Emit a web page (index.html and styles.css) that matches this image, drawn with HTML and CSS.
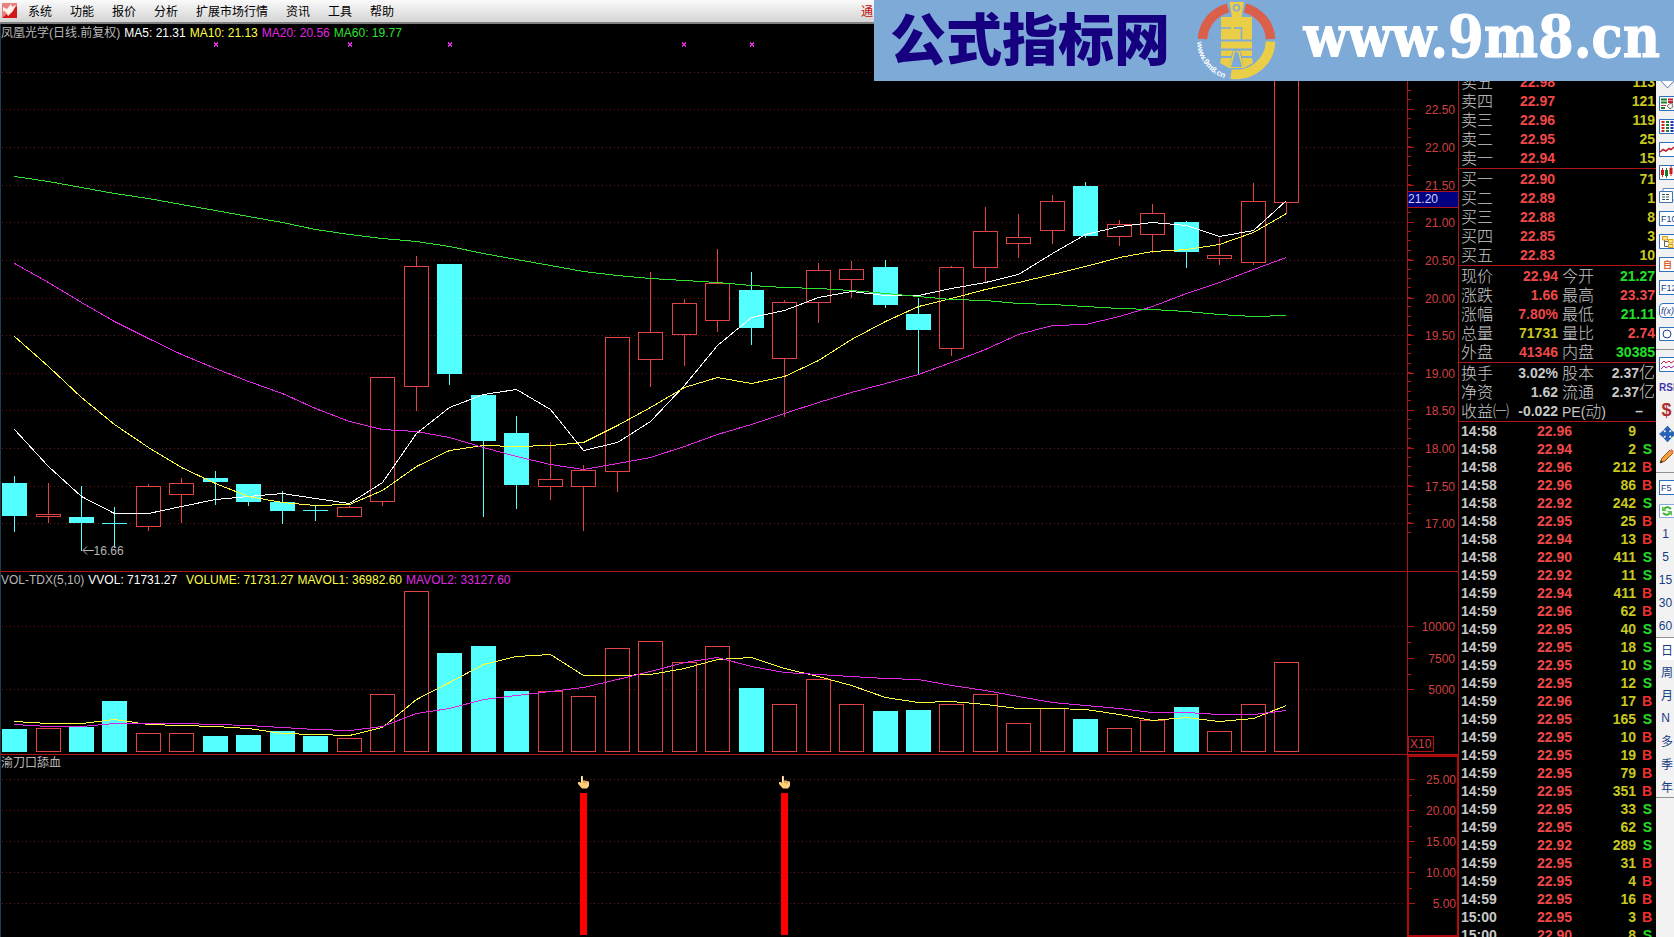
FILE: index.html
```html
<!DOCTYPE html>
<html lang="zh-CN">
<head>
  <meta charset="UTF-8"/>
  <meta name="viewport" content="width=device-width, initial-scale=1.0"/>
  <title>凤凰光学 日线</title>
  <link rel="stylesheet" href="styles.css">
</head>
<body>

  <header class="menubar">
    <svg class="app-icon" viewBox="0 0 15 15">
      <rect width="15" height="15" fill="#e88080"/>
      <path d="M0 15L15 3V15Z" fill="#d01818"/>
      <path d="M1 4L5 6L9 1L10 4L14 2L11 8L6 13L4 9L1 8Z" fill="#fff0ea"/>
    </svg>
    <nav class="menu">
      <button>系统</button>
      <button>功能</button>
      <button>报价</button>
      <button>分析</button>
      <button>扩展市场行情</button>
      <button>资讯</button>
      <button>工具</button>
      <button>帮助</button>
    </nav>
    <div class="app-title">通</div>
  </header>

  <main class="workspace">
    <div class="charts">
      <!-- Daily candles -->
      <section class="panel price-panel">
        <div class="plot">
          <svg id="pricePlot" class="drawing" viewBox="0 24 1407 547" preserveAspectRatio="none"></svg>
          <div class="legend">
            <span class="muted">凤凰光学(日线.前复权)</span>
            <span class="white">MA5: 21.31</span>
            <span class="yellow">MA10: 21.13</span>
            <span class="magenta">MA20: 20.56</span>
            <span class="green">MA60: 19.77</span>
          </div>
          <div class="low-mark">
            <svg width="12" height="11" viewBox="0 0 12 11"><path d="M12 5.5H1M5 1.5L1 5.5L5 9.5" fill="none" stroke="#b4b4b4"/></svg>
            <span>16.66</span>
          </div>
        </div>
        <div class="axis">
          <svg id="priceAxis" class="drawing"></svg>
          <div class="cursor-price">21.20</div>
        </div>
      </section>

      <!-- Volume -->
      <section class="panel">
        <div class="plot">
          <svg id="volumePlot" class="drawing" viewBox="0 572 1407 182" preserveAspectRatio="none"></svg>
          <div class="legend">
            <span class="muted">VOL-TDX(5,10)</span>
            <span class="white wide">VVOL: 71731.27</span>
            <span class="yellow">VOLUME: 71731.27</span>
            <span class="yellow">MAVOL1: 36982.60</span>
            <span class="magenta">MAVOL2: 33127.60</span>
          </div>
        </div>
        <div class="axis">
          <svg id="volumeAxis" class="drawing"></svg>
          <div class="unit">X10</div>
        </div>
      </section>

      <!-- Signal indicator -->
      <section class="panel">
        <div class="plot">
          <svg id="signalPlot" class="drawing" viewBox="0 755 1407 182" preserveAspectRatio="none"></svg>
          <div class="legend"><span class="muted">渝刀口舔血</span></div>
          <svg class="hand first" viewBox="0 0 11 14"><path d="M3 1.5Q4 0 5 1.5V6L6 5L7 6L8 5.500L9 6.500L10 6L11 7V11L9 13.500H4L0 9V7H2L3 8Z" fill="#ffcf7a"/><path d="M3.500 1.500V7" stroke="#fff2cc"/><path d="M6 6V8M8 6.500V8.500" stroke="#c08038"/></svg>
          <svg class="hand second" viewBox="0 0 11 14"><path d="M3 1.5Q4 0 5 1.5V6L6 5L7 6L8 5.500L9 6.500L10 6L11 7V11L9 13.500H4L0 9V7H2L3 8Z" fill="#ffcf7a"/><path d="M3.500 1.500V7" stroke="#fff2cc"/><path d="M6 6V8M8 6.500V8.500" stroke="#c08038"/></svg>
        </div>
        <div class="axis selected">
          <svg id="signalAxis" class="drawing"></svg>
        </div>
      </section>
    </div>

    <aside class="quote">
      <table class="levels">
        <tr><th>卖五</th><td class="red">22.98</td><td class="vol">113</td></tr>
        <tr><th>卖四</th><td class="red">22.97</td><td class="vol">121</td></tr>
        <tr><th>卖三</th><td class="red">22.96</td><td class="vol">119</td></tr>
        <tr><th>卖二</th><td class="red">22.95</td><td class="vol">25</td></tr>
        <tr><th>卖一</th><td class="red">22.94</td><td class="vol">15</td></tr>
      </table>
      <table class="levels">
        <tr><th>买一</th><td class="red">22.90</td><td class="vol">71</td></tr>
        <tr><th>买二</th><td class="red">22.89</td><td class="vol">1</td></tr>
        <tr><th>买三</th><td class="red">22.88</td><td class="vol">8</td></tr>
        <tr><th>买四</th><td class="red">22.85</td><td class="vol">3</td></tr>
        <tr><th>买五</th><td class="red">22.83</td><td class="vol">10</td></tr>
      </table>
      <table class="summary">
        <tr><th>现价</th><td class="red">22.94</td><th>今开</th><td class="up">21.27</td></tr>
        <tr><th>涨跌</th><td class="red">1.66</td><th>最高</th><td class="red">23.37</td></tr>
        <tr><th>涨幅</th><td class="red">7.80%</td><th>最低</th><td class="up">21.11</td></tr>
        <tr><th>总量</th><td class="vol">71731</td><th>量比</th><td class="red">2.74</td></tr>
        <tr><th>外盘</th><td class="red">41346</td><th>内盘</th><td class="up">30385</td></tr>
      </table>
      <table class="summary">
        <tr><th>换手</th><td>3.02%</td><th>股本</th><td>2.37<i>亿</i></td></tr>
        <tr><th>净资</th><td>1.62</td><th>流通</th><td>2.37<i>亿</i></td></tr>
        <tr><th>收益㈠</th><td>-0.022</td><th><b>PE(</b>动<b>)</b></th><td class="none">–</td></tr>
      </table>
      <table class="ticks" id="ticks"></table>
    </aside>

    <div class="toolbar">
      <button aria-label="下翻"><svg viewBox="0 0 18 18"><path d="M5.500 1.500H11.500V8.500H15.500L8.500 16L1.500 8.500H5.500Z" fill="#fff" stroke="#5878b8"/></svg></button>
      <button aria-label="报价表"><svg viewBox="0 0 18 18"><path d="M.5 1.500H18V15.500H.5Z" fill="#fff" stroke="#2f6fc0"/><path d="M2 4.500H8M2 7.500H8M2 13H6" stroke="#18802c" stroke-width="2"/><path d="M9 4.500H14M9 7H14" stroke="#c02030" stroke-width="2"/><path d="M2 10.500H7" stroke="#c02030"/><path d="M8 11L11 14L14 12L13 8L10 9Z" fill="#eee" stroke="#777"/></svg></button>
      <button aria-label="列表"><svg viewBox="0 0 18 18"><path d="M.5 1.500H18V15.500H.5Z" fill="#fff" stroke="#2f6fc0"/><g stroke-width="3" stroke-dasharray="2 1"><path d="M4 3V15" stroke="#d02020"/><path d="M8.500 3V15" stroke="#108030"/><path d="M13 3V15" stroke="#2030b0"/></g></svg></button>
      <button aria-label="分时图"><svg viewBox="0 0 18 18"><path d="M.5 1.500H18V15.500H.5Z" fill="#fff" stroke="#2f6fc0"/><path d="M1 11L4 8.500L7 10L10 7.500L12 8.500L15 6" fill="none" stroke="#c01c24" stroke-width="1.500"/></svg></button>
      <button aria-label="K线图"><svg viewBox="0 0 18 18"><path d="M.5 1.500H18V15.500H.5Z" fill="#fff" stroke="#2f6fc0"/><path d="M3.500 6V11M12 4V10" stroke="#d01818" stroke-width="3"/><path d="M7.500 6V12" stroke="#0c802c" stroke-width="3"/><path d="M3.500 4V13M12 2V12" stroke="#d01818"/><path d="M7.500 4V14" stroke="#0c802c"/></svg></button>
      <button aria-label="多窗口"><svg viewBox="0 0 18 18"><path d="M4 1.500H18V13H4Z" fill="#fff" stroke="#6888b8"/><path d="M.5 4.500H13.500V15.500H.5Z" fill="#fff" stroke="#4470b0"/><path d="M3 7.500H11M3 10H11M3 12.500H11" stroke="#355" stroke-dasharray="3 1"/></svg></button>
      <button class="key">F10</button>
      <button aria-label="结构"><svg viewBox="0 0 18 18"><path d="M.5 1.500H18V15.500H.5Z" fill="#fff" stroke="#2f6fc0"/><path d="M5.500 7V13.500H10M5.500 8.500H10" fill="none" stroke="#666"/><path d="M3.500 3.500H8.500V7H3.500ZM9.500 6.500H14V10H9.500ZM9.500 11.500H14V14.500H9.500Z" fill="#ffe890" stroke="#d4a010"/></svg></button>
      <button class="key own">自</button>
      <button class="key">F12</button>
      <button class="key formula">f(x)</button>
      <button aria-label="圆"><svg viewBox="0 0 18 18"><path d="M.5 2.500H18V15.500H.5Z" fill="#fff" stroke="#2f6fc0"/><circle cx="8" cy="9" r="4" fill="none" stroke="#184090"/></svg></button>
      <hr>
      <button aria-label="叠加"><svg viewBox="0 0 18 18"><path d="M.5 1.500H18V15.500H.5Z" fill="#fff" stroke="#2f6fc0"/><path d="M2 8L5 5L7 7L10 5L12 7L15 5" fill="none" stroke="#c02040"/><path d="M2 13L5 10L7 12L10 10L12 12L15 10" fill="none" stroke="#a020a0"/></svg></button>
      <button class="rsi">RSI</button>
      <button class="money">$</button>
      <button aria-label="移动"><svg viewBox="0 0 18 18"><path d="M8.500 1L12 5H10V7.500H12.500V5.500L16.500 9L12.500 12.500V10.500H10V13H12L8.500 17L5 13H7V10.500H4.500V12.500L.5 9L4.500 5.500V7.500H7V5H5Z" fill="#2464c0" stroke="#103c88" stroke-width=".5"/></svg></button>
      <button aria-label="画线"><svg viewBox="0 0 18 18"><path d="M1 15L3 10L11 2L14 5L6 13Z" fill="#f4a038" stroke="#9a5018"/><path d="M10.500 2.500L12.500 1L15 3.500L13.500 5.500Z" fill="#e08070"/><path d="M1 15L2 12L4 14Z" fill="#333"/></svg></button>
      <hr>
      <button class="key">F5</button>
      <button aria-label="刷新"><svg viewBox="0 0 18 18"><path d="M.5 2.500H18V15.500H.5Z" fill="#fff" stroke="#88aadd"/><path d="M4 8Q8 3 12 7M12 10Q8 15 4 11" fill="none" stroke="#38b030" stroke-width="2"/><path d="M3 4V9H8ZM13 14V9H8Z" fill="#58c84c"/></svg></button>
      <button>1</button>
      <button>5</button>
      <button>15</button>
      <button>30</button>
      <button>60</button>
      <button class="cjk current">日</button>
      <button class="cjk">周</button>
      <button class="cjk">月</button>
      <button>N</button>
      <button class="cjk">多</button>
      <button class="cjk">季</button>
      <button class="cjk last">年</button>
    </div>
  </main>

  <div class="banner">
    <div class="site-name">公式指标网</div>
    <svg class="seal" viewBox="0 0 80 81">
      <path d="M5.500 39A34 34 0 0 1 31 8M48 8A34 34 0 0 1 73.500 39" fill="none" stroke="#db604c" stroke-width="9.500"/>
      <path d="M73.500 41.500A34 34 0 0 1 34 74" fill="none" stroke="#eace48" stroke-width="9.500"/>
      <path d="M32.500 2H47L44.500 17H55V39.500H24V17H35Z" fill="#eace48"/>
      <circle cx="39.500" cy="7.800" r="3" fill="#eace48" stroke="#7eaad8" stroke-width="1.500"/>
      <path d="M24 28H34M37 28H44.500V39.500" fill="none" stroke="#7eaad8" stroke-width="1.500"/>
      <path d="M24 41.500H55V48.500H24ZM24 50.500H36L34 56H24ZM43 50.500H55V56H45ZM24 58H34L32 68L23 63ZM45 58H55L56 63L47 68Z" fill="#eace48"/>
      <path d="M36.500 51H42.500L47 68H32Z" fill="#eace48"/>
      <path d="M38 52H41L45 67H34Z" fill="#7eaad8"/>
      <path id="sealArc" d="M0 42A39 39 0 0 0 31 79" fill="none"/>
      <text class="seal-text"><textPath href="#sealArc">www.9m8.cn</textPath></text>
    </svg>
    <div class="site-url">www.9m8.cn</div>
  </div>

  <script>
    // All y values are in the units of the plot's viewBox
    // candle: high, body top, body bottom, low, 1 = falling day
    const candles = [
      [476,483,516,531,1],[483,514,516,522,0],[486,517,523,550,1],[507,523,524,547,1],
      [484,486,526,530,0],[478,483,494,522,0],[471,478,482,504,1],[484,484,502,505,1],
      [491,502,511,523,1],[506,510,511,520,1],[506,507,516,516,0],[377,377,501,505,0],
      [256,266,386,410,0],[264,264,374,384,1],[395,395,441,516,1],[416,433,485,508,1],
      [442,479,486,499,0],[465,470,486,530,0],[337,337,471,491,0],[272,332,359,386,0],
      [299,303,334,365,0],[249,283,320,331,0],[272,290,328,344,1],[300,302,358,416,0],
      [263,270,302,322,0],[261,269,279,297,0],[260,267,305,307,1],[298,314,330,373,1],
      [266,267,348,355,0],[207,231,267,282,0],[214,237,243,257,0],[195,201,230,243,0],
      [182,186,236,237,1],[220,224,236,245,0],[204,213,234,252,0],[221,222,252,267,1],
      [238,255,258,264,0],[183,201,262,264,0],[44,76,202,213,0]
    ];
    const averages = {
      '#ffffff': [429,466,496,513,513,506,499,496,493,498,503,482,433,407,394,389,409,450,442,421,385,345,317,310,297,291,295,295,288,282,274,253,234,226,222,225,236,230,200],
      '#ffff40': [336,366,397,424,447,467,483,496,502,505,504,490,466,450,445,446,445,442,425,407,387,377,383,376,360,339,321,306,298,289,282,274,266,257,251,249,244,232,213],
      '#e028e0': [263,282,302,321,338,354,368,381,393,408,421,429,431,437,447,456,464,469,463,457,446,434,424,413,402,392,383,374,362,349,334,325,324,316,306,293,282,269,257],
      '#30e030': [176,181,187,193,198,204,210,216,222,229,234,238,241,246,253,259,265,271,275,278,280,282,285,287,288,290,293,296,299,300,303,304,306,308,309,311,314,316,315]
    };
    const volumes = [729,728,727,701,733,733,736,735,731,736,738,694,591,653,646,691,691,696,648,641,662,646,688,704,679,704,711,710,704,694,723,708,719,728,720,707,731,704,662];
    const volumeAverages = {
      '#ffff40': [721,723,723,719,724,725,726,728,733,734,735,727,699,682,664,656,654,675,675,674,668,659,657,668,676,685,697,702,701,704,708,708,709,714,720,717,721,718,705],
      '#e028e0': [724,726,726,723,723,723,724,725,727,729,730,726,713,708,699,695,691,687,679,671,662,657,666,672,674,676,678,679,685,690,696,702,705,708,712,712,714,714,710]
    };
    const BASE = 751;

    const centre = i => Math.floor(14.55 + 33.48 * i) + 0.5;

    function gridLines(levels) {
      return levels.map(y => `<path class="grid" d="M2 ${y + 0.5}H1404"/>`).join('');
    }
    function lines(sets) {
      return Object.entries(sets).map(([color, ys]) =>
        `<polyline class="average" stroke="${color}" points="${ys.map((y, i) => centre(i) + ',' + (y + 0.5)).join(' ')}"/>`).join('');
    }
    function bar(i, top, bottom, down) {
      const x = centre(i) - 12;
      return down
        ? `<rect class="down" x="${x - 0.5}" y="${top}" width="25" height="${Math.max(bottom - top, 1)}"/>`
        : `<rect class="up" x="${x}" y="${top + 0.5}" width="24" height="${bottom - top}"/>`;
    }
    function wick(i, from, to, down) {
      return to > from ? `<path class="${down ? 'down' : 'up'}" d="M${centre(i)} ${from}V${to}"/>` : '';
    }
    // labels stay unstretched: only their y follows the panel height
    function axis(id, top, height, marks, minor) {
      const pct = y => ((y - top) / height * 100) + '%';
      let out = '';
      for (const [y, label] of marks) {
        out += `<line x1="0" x2="6" y1="${pct(y + 0.5)}" y2="${pct(y + 0.5)}"/>`;
        out += `<text x="47" y="${pct(y + 5)}">${label}</text>`;
      }
      for (const y of minor) out += `<line x1="0" x2="3" y1="${pct(y)}" y2="${pct(y)}"/>`;
      document.getElementById(id).innerHTML = out;
    }

    // price panel
    const priceLevels = [109,147,185,222,260,298,335,373,410,448,486,523];
    let price = gridLines([72, ...priceLevels]);
    candles.forEach(([high, top, bottom, low, down], i) => {
      price += wick(i, high, top, down) + wick(i, bottom, low + 1, down) + bar(i, top, bottom, down);
    });
    price += lines(averages);
    [216,350,450,684,752].forEach(x => {
      price += `<path class="cross" d="M${x - 2} 42.5l4 4m0 -4l-4 4"/>`;
    });
    document.getElementById('pricePlot').innerHTML = price;
    const quarters = [];
    for (let y = 90; y < 540; y += 9.4) quarters.push(Math.round(y) + 0.5);
    axis('priceAxis', 24, 547, priceLevels.map((y, i) => [y, (22.5 - i * 0.5).toFixed(2)]), quarters);

    // volume panel
    document.getElementById('volumePlot').innerHTML = gridLines([626,689]) +
      volumes.map((y, i) => bar(i, y, BASE + candles[i][4], candles[i][4])).join('') + lines(volumeAverages);
    axis('volumeAxis', 572, 182, [[626,'10000'],[658,'7500'],[689,'5000']], [642.5,674.5]);

    // signal panel
    const signalLevels = [779,810,841,872,903];
    document.getElementById('signalPlot').innerHTML = gridLines(signalLevels) +
      [17,23].map(i => `<rect class="signal" x="${centre(i) - 3.5}" y="793" width="7" height="142"/>`).join('');
    axis('signalAxis', 757, 178, signalLevels.map((y, i) => [y, (25 - i * 5).toFixed(2)]), [795.5,826.5,857.5,888.5]);

    // trade ticks
    const ticks = `14:58 22.96 9 -|14:58 22.94 2 S|14:58 22.96 212 B|14:58 22.96 86 B|14:58 22.92 242 S|14:58 22.95 25 B|14:58 22.94 13 B|14:58 22.90 411 S|14:59 22.92 11 S|14:59 22.94 411 B|14:59 22.96 62 B|14:59 22.95 40 S|14:59 22.95 18 S|14:59 22.95 10 S|14:59 22.95 12 S|14:59 22.96 17 B|14:59 22.95 165 S|14:59 22.95 10 B|14:59 22.95 19 B|14:59 22.95 79 B|14:59 22.95 351 B|14:59 22.95 33 S|14:59 22.95 62 S|14:59 22.92 289 S|14:59 22.95 31 B|14:59 22.95 4 B|14:59 22.95 16 B|15:00 22.95 3 B|15:00 22.90 8 S`;
    document.getElementById('ticks').innerHTML = ticks.split('|').map(row => {
      const [time, p, vol, side] = row.split(' ');
      return `<tr><td>${time}</td><td class="red">${p}</td><td class="vol">${vol}</td><td class="side ${side === 'S' ? 'up' : 'buy'}">${side === '-' ? '' : side}</td></tr>`;
    }).join('');
  </script>

</body>
</html>
```
FILE: styles.css
```css
* {
  box-sizing: border-box;
}
body {
  margin: 0;
  height: 100vh;
  display: flex;
  flex-direction: column;
  overflow: hidden;
  position: relative;
  background: #000;
  color: #c8c8c8;
  font-family: "Liberation Sans", "Noto Sans CJK SC", sans-serif;
  font-size: 12px;
}
button {
  font: inherit;
  color: inherit;
  border: 0;
  padding: 0;
  background: none;
}

/* menu bar */
.menubar {
  flex: none;
  height: 24px;
  display: flex;
  align-items: center;
  padding: 0 0 2px 2px;
  background: linear-gradient(#fafafa, #d4d4d4);
  border-bottom: 2px solid #808080;
  color: #000;
}
.app-icon {
  width: 15px;
  height: 15px;
  margin-right: 11px;
}
.menu {
  display: flex;
  gap: 18px;
}
.app-title {
  width: 813px;
  margin-left: auto;
  color: #c01010;
}

.workspace {
  flex: 1;
  min-height: 0;
  display: flex;
}

/* charts */
.charts {
  flex: 1;
  min-width: 0;
  display: grid;
  grid-template-rows: minmax(0, 547fr) minmax(0, 183fr) minmax(0, 183fr);
  box-shadow: inset 1px 0 #1c3c50;
}
.panel {
  display: flex;
  border-top: 1px solid #b01414;
}
.price-panel {
  border-top: 0;
}
.plot {
  flex: 1;
  min-width: 0;
  position: relative;
}
.axis {
  width: 51px;
  position: relative;
  border-left: 1px solid #b01414;
}
.axis.selected {
  border: 2px solid #b40808;
  border-width: 2px 1px 2px 2px;
}
.drawing {
  display: block;
  width: 100%;
  height: 100%;
  shape-rendering: crispEdges;
}
.legend {
  position: absolute;
  top: 0;
  left: 1px;
  display: flex;
  gap: 4px;
  line-height: 16px;
  white-space: nowrap;
}
.price-panel .legend {
  top: 1px;
}
.wide {
  margin-right: 5px;
}
.muted { color: #b8b8b8; }
.white { color: #fff; }
.yellow { color: #ffff40; }
.magenta { color: #e028e0; }
.green { color: #30e030; }

.grid {
  stroke: #701414;
  stroke-dasharray: 1 3;
}
.average {
  fill: none;
}
path.up,
rect.up {
  fill: none;
  stroke: #e04444;
}
path.down {
  stroke: #54ffff;
}
rect.up {
  fill: #000;
}
rect.down {
  fill: #54ffff;
}
.cross {
  stroke: #e028e0;
}
.signal {
  fill: #ff0000;
}
.axis line {
  stroke: #b01414;
}
.axis text {
  fill: #d04040;
  text-anchor: end;
}
.low-mark {
  position: absolute;
  left: 5.8%;
  top: 95%;
  display: flex;
  align-items: center;
  line-height: 14px;
  color: #b4b4b4;
}
.cursor-price {
  position: absolute;
  left: 0;
  right: 0;
  top: 30.5%;
  height: 17px;
  line-height: 15px;
  border: solid #b01414;
  border-width: 1px 0;
  background: #000080;
  color: #d0d0ff;
}
.unit {
  position: absolute;
  left: 0;
  bottom: 2px;
  height: 16px;
  line-height: 14px;
  padding: 0 2px 0 1px;
  border: 1px solid #b01414;
  color: #d04040;
}
.hand {
  position: absolute;
  top: 11%;
  width: 11px;
  height: 14px;
}
.hand.first { left: 41.1%; }
.hand.second { left: 55.4%; }

/* quote panel */
.quote {
  width: 198px;
  padding-top: 48px;
  border-left: 1px solid #b01414;
  font-size: 14px;
  font-weight: bold;
  overflow: hidden;
}
.quote table {
  width: 100%;
  table-layout: fixed;
  border-spacing: 0;
  border-bottom: 1px solid #b01414;
  padding: 1px 1px 0 2px;
}
.quote th,
.quote td {
  height: 19px;
  line-height: 19px;
  padding: 0;
  white-space: nowrap;
  text-align: right;
}
.quote th {
  width: 38px;
  font-size: 16px;
  font-weight: 300;
  text-align: left;
}
.quote th + td {
  width: 56px;
}
.quote td + th {
  padding-left: 4px;
}
.quote th b {
  font-size: 14px;
  line-height: 1;
}
.quote i {
  font-style: normal;
  font-weight: 300;
  font-size: 16px;
  line-height: 1;
}
.quote .red { color: #f04848; }
.quote .buy { color: #f03030; }
.quote .up { color: #20e028; }
.quote .vol { color: #c8c820; }
.quote .none { padding-right: 12px; }
.quote .ticks {
  padding-top: 0;
  border-bottom: 0;
}
.quote .ticks td {
  width: 64px;
  height: 18px;
  line-height: 18px;
}
.quote .ticks td:first-child {
  width: 60px;
  text-align: left;
}
.quote .ticks td:nth-child(2) {
  width: 51px;
}
.quote .ticks .side {
  width: auto;
  padding-right: 3px;
}

/* right toolbar */
.toolbar {
  width: 18px;
  padding-top: 45px;
  display: flex;
  flex-direction: column;
  background: #f2f2f2;
  color: #183c84;
  overflow: hidden;
}
.toolbar button {
  flex: none;
  height: 23px;
  width: 100%;
  padding-left: 1px;
  display: flex;
  align-items: center;
  justify-content: center;
  white-space: nowrap;
}
.toolbar svg {
  flex: none;
  width: 18px;
  height: 18px;
  margin-left: 4px;
}
.toolbar hr {
  flex: none;
  width: 100%;
  height: 1px;
  margin: 4px 0 3px;
  border: 0;
  background: #909090;
}
.toolbar .key {
  width: 20px;
  height: 15px;
  margin: 4px 0 4px 3px;
  padding-left: 1px;
  justify-content: flex-start;
  border: 1px solid #2f6fc0;
  background: #fff;
  font-size: 9px;
}
.toolbar .own {
  padding-left: 3px;
  color: #e06030;
  font-weight: bold;
}
.toolbar .formula {
  border-radius: 4px;
  font-style: italic;
}
.toolbar .rsi {
  padding-left: 3px;
  justify-content: flex-start;
  color: #4038a8;
  font-size: 10px;
  font-weight: bold;
}
.toolbar .money {
  padding-left: 3px;
  color: #b03030;
  font-size: 18px;
  font-weight: bold;
}
.toolbar .cjk {
  padding-left: 4px;
}
.toolbar .current {
  background: #fff;
  border-top: 1px solid #909090;
}
.toolbar .last {
  border-bottom: 1px solid #909090;
}

/* site banner over the top right corner */
.banner {
  position: absolute;
  top: 0;
  right: 0;
  width: 800px;
  height: 81px;
  padding: 0 14px 0 16px;
  display: flex;
  align-items: center;
  justify-content: space-between;
  background: #7eaad8;
}
.site-name {
  color: #170080;
  font-size: 56px;
  font-weight: 900;
  line-height: 72px;
}
.seal {
  width: 80px;
  height: 81px;
}
.seal-text {
  fill: #fff;
  font-size: 8px;
  font-weight: bold;
}
.site-url {
  padding-bottom: 8px;
  color: #fff;
  font-family: "DejaVu Serif Condensed", "DejaVu Serif", serif;
  font-size: 57px;
  font-weight: bold;
  line-height: 70px;
  -webkit-text-stroke: 1px #fff;
}
```
